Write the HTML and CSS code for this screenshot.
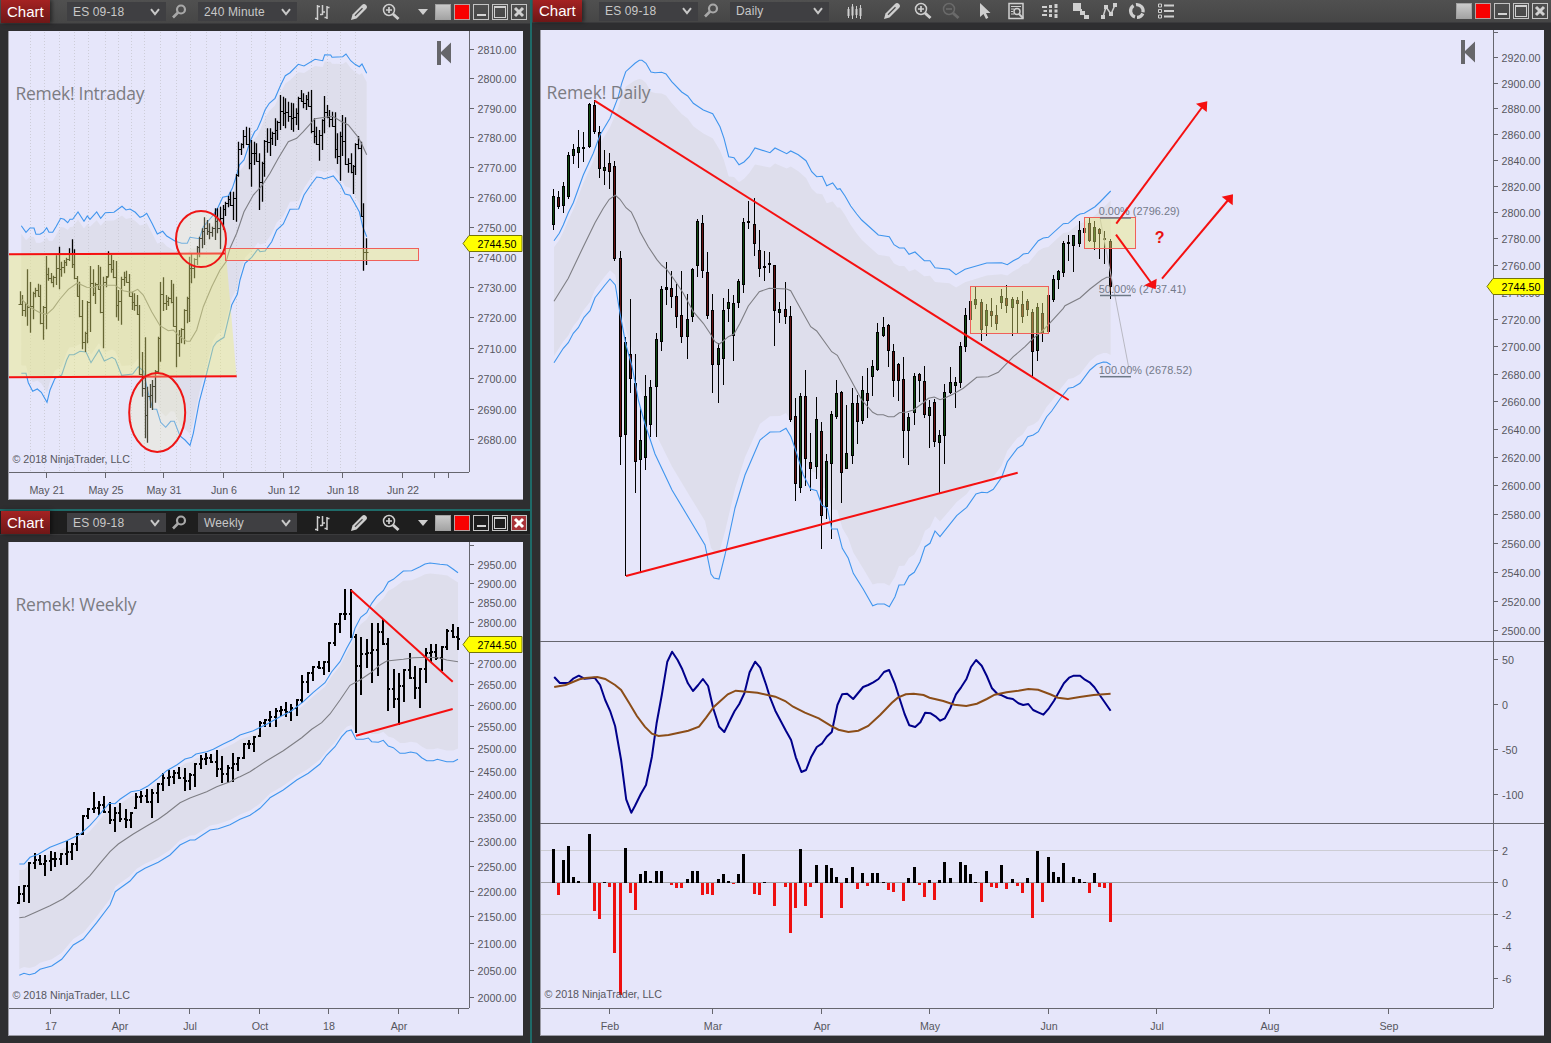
FILE: index.html
```html
<!DOCTYPE html>
<html lang="en">
<head>
<meta charset="utf-8">
<title>Chart workspace</title>
<link rel="stylesheet" href="styles.css">
</head>
<body>
<svg class="sprite" aria-hidden="true">
  <symbol id="i-chev" viewBox="0 0 10 8"><path d="M1 1.2 5 6.2 9 1.2" fill="none" stroke="currentColor" stroke-width="2"/></symbol>
  <symbol id="i-mag" viewBox="0 0 18 18"><circle cx="11" cy="6.5" r="4" fill="none" stroke="currentColor" stroke-width="2.2"/><path d="M8 9.5 3 14.5" stroke="currentColor" stroke-width="2.6"/></symbol>
  <symbol id="i-ohlc" viewBox="0 0 18 18"><path d="M4.500 2v15M2 15.500h2.500M4.500 3.500H7M9.500 2v10M7 11.500h2.500M9.500 9H12M14 3v13M11.500 14.500H14M14 4.500h2.500" fill="none" stroke="currentColor" stroke-width="1.500"/></symbol>
  <symbol id="i-candle" viewBox="0 0 18 18"><path d="M2.500 5v11M6.500 2v15M10.500 4v12M14.500 3v14" stroke="currentColor"/><path d="M1.500 7h2v7h-2zM5.500 4.500h2v9h-2zM9.500 7h2v6h-2zM13.500 6h2v8h-2z" fill="currentColor"/></symbol>
  <symbol id="i-pen" viewBox="0 0 18 18"><path d="M1 17 2.500 11.500 12 2Q14 .2 16 2T16 6L6.500 15.500Z" fill="currentColor"/><path d="M5 12.800 12.500 5.300" stroke="#4a4a4a" stroke-width="1.300"/></symbol>
  <symbol id="i-zin" viewBox="0 0 18 18"><circle cx="7" cy="7" r="5.500" fill="none" stroke="currentColor" stroke-width="1.500"/><path d="M4 7h6M7 4v6" stroke="currentColor" stroke-width="1.700"/><path d="m11 11 5.500 5" stroke="currentColor" stroke-width="3"/></symbol>
  <symbol id="i-zout" viewBox="0 0 18 18"><circle cx="7" cy="7" r="5.500" fill="none" stroke="currentColor" stroke-width="1.500"/><path d="M4 7h6" stroke="currentColor" stroke-width="1.700"/><path d="m11 11 5.500 5" stroke="currentColor" stroke-width="3"/></symbol>
  <symbol id="i-caret" viewBox="0 0 10 6"><path d="M0 0h10L5 6Z" fill="currentColor"/></symbol>
  <symbol id="i-cur" viewBox="0 0 18 18"><path d="M4 1v14l3.500-3 2.500 5 2.300-1.200L10 11h4.500Z" fill="currentColor"/></symbol>
  <symbol id="i-doc" viewBox="0 0 18 18"><path d="M2 1.500h14v15H2z" fill="none" stroke="currentColor" stroke-width="1.500"/><path d="M4 4.500h10M4 7h3M4 9.500h2M4 12h3" stroke="currentColor"/><circle cx="10" cy="9.500" r="3" fill="none" stroke="currentColor" stroke-width="1.500"/><path d="m12 12 4 4" stroke="currentColor" stroke-width="2"/></symbol>
  <symbol id="i-dom" viewBox="0 0 18 18"><path d="M1 4h5v2H1zM2.500 8H6v2H2.500zM1 12h5v2H1zM8 3h3v3H8zM8 7.500h3v3H8zM8 12h3v3H8zM13.500 2h3v4h-3zM13.500 7.500h3v3h-3zM13.500 12h3v4h-3z" fill="currentColor"/></symbol>
  <symbol id="i-blocks" viewBox="0 0 18 18"><path d="M1 1h8v8H1zM8 10V7h2v2h3v4H8zM12 13h5v4h-5z" fill="currentColor"/></symbol>
  <symbol id="i-poly" viewBox="0 0 18 18"><path d="M3 15 6 5l5 7 4-9" fill="none" stroke="currentColor" stroke-width="1.500"/><path d="M1 13h4v4H1zM4 3h4v4H4zM9 10h4v4H9zM13 1h4v4h-4z" fill="currentColor"/></symbol>
  <symbol id="i-ring" viewBox="0 0 18 18"><path d="M7 15A6.300 6.300 0 0 1 5.500 3.700M8 2.700a6.300 6.300 0 0 1 7 7.500M14.800 11.500A6.300 6.300 0 0 1 9 15.300" fill="none" stroke="currentColor" stroke-width="3.200"/></symbol>
  <symbol id="i-list" viewBox="0 0 18 18"><path d="M1.500 2h3v3h-3zM1.500 7.500h3v3h-3zM1.500 13h3v3h-3z" fill="none" stroke="currentColor"/><path d="M7 3.500h10M7 9h10M7 14.500h10" stroke="currentColor" stroke-width="2"/></symbol>
  <symbol id="i-x" viewBox="0 0 16 16"><path d="m4 4 8 8M12 4l-8 8" stroke="currentColor" stroke-width="3"/></symbol>
</svg>

<main class="workspace">
  <div class="left">
    <section class="window">
      <header class="bar">
        <span class="tab">Chart</span>
        <span class="combo">ES 09-18<svg class="chev"><use href="#i-chev"/></svg></span>
        <svg class="mag"><use href="#i-mag"/></svg>
        <span class="combo second">240 Minute<svg class="chev"><use href="#i-chev"/></svg></span>
        <div class="tools">
          <svg><use href="#i-ohlc"/></svg><svg><use href="#i-pen"/></svg><svg><use href="#i-zin"/></svg><svg class="caret"><use href="#i-caret"/></svg>
        </div>
        <div class="buttons"><i class="grey"></i><i class="red"></i><i class="min"></i><i class="max"></i><i class="close"><svg><use href="#i-x"/></svg></i></div>
      </header>
      <svg class="plot" id="intraday" viewBox="8 31 515 469"></svg>
    </section>
    <section class="window active">
      <header class="bar">
        <span class="tab">Chart</span>
        <span class="combo">ES 09-18<svg class="chev"><use href="#i-chev"/></svg></span>
        <svg class="mag"><use href="#i-mag"/></svg>
        <span class="combo second">Weekly<svg class="chev"><use href="#i-chev"/></svg></span>
        <div class="tools">
          <svg><use href="#i-ohlc"/></svg><svg><use href="#i-pen"/></svg><svg><use href="#i-zin"/></svg><svg class="caret"><use href="#i-caret"/></svg>
        </div>
        <div class="buttons"><i class="grey"></i><i class="red"></i><i class="min"></i><i class="max"></i><i class="close"><svg><use href="#i-x"/></svg></i></div>
      </header>
      <svg class="plot" id="weekly" viewBox="8 542 515 494"></svg>
    </section>
  </div>
  <section class="window wide">
    <header class="bar">
      <span class="tab">Chart</span>
      <span class="combo">ES 09-18<svg class="chev"><use href="#i-chev"/></svg></span>
      <svg class="mag"><use href="#i-mag"/></svg>
      <span class="combo second">Daily<svg class="chev"><use href="#i-chev"/></svg></span>
      <div class="tools">
        <svg><use href="#i-candle"/></svg><svg><use href="#i-pen"/></svg><svg><use href="#i-zin"/></svg><svg class="dim"><use href="#i-zout"/></svg><svg><use href="#i-cur"/></svg><svg><use href="#i-doc"/></svg><svg><use href="#i-dom"/></svg><svg><use href="#i-blocks"/></svg><svg><use href="#i-poly"/></svg><svg><use href="#i-ring"/></svg><svg><use href="#i-list"/></svg>
      </div>
      <div class="buttons"><i class="grey"></i><i class="red"></i><i class="min"></i><i class="max"></i><i class="close"><svg><use href="#i-x"/></svg></i></div>
    </header>
    <svg class="plot" id="daily" viewBox="540 30 1004 1006"></svg>
  </section>
</main>
<script src="charts.js"></script>
</body>
</html>
```
FILE: styles.css
```css
* { box-sizing: border-box; }
body {
  margin: 0;
  width: 1551px;
  height: 1043px;
  overflow: hidden;
  background: #2e2e30;
  font-family: "Liberation Sans", Arial, sans-serif;
}
.sprite { display: none; }
.workspace { display: grid; grid-template-columns: 532px 1019px; height: 1043px; }
.left {
  display: grid;
  grid-template-rows: 511px 532px;
  border-right: 2px solid #1f6a68;
}
.window { display: flex; flex-direction: column; padding: 0 7px 0 8px; background: #2e2e30; }
.left .window:first-child { border-bottom: 2px solid #1f6a68; }
.plot { display: block; flex: none; background: #e6e6fa; }
#intraday, #weekly { width: 515px; margin-top: 7px; }
#intraday { height: 469px; }
#weekly { height: 494px; }
#daily { width: 1004px; height: 1006px; margin-top: 7px; }

/* title bar */
.bar {
  display: flex;
  align-items: center;
  flex: none;
  height: 24px;
  margin: 0 -7px 0 -8px;
  padding-left: 1px;
  background: linear-gradient(#505050, #464646);
  border-bottom: 1px solid #3a3a3c;
  color: #d0d0d0;
}
.wide .bar { height: 23px; padding-right: 3px; }
.active .bar { background: #1e1e1e; border-bottom-color: #3a3a3c; }
.tab {
  align-self: stretch;
  width: 49px;
  padding: 3px 0 0 6px;
  font-size: 15px;
  line-height: 17px;
  color: #fff;
  background: linear-gradient(#a52222, #6e1717);
  box-shadow: 2px 0 4px rgba(0, 0, 0, .5);
}
.wide .tab { padding-top: 2px; }
.combo {
  display: flex;
  align-items: center;
  justify-content: space-between;
  width: 99px;
  height: 19px;
  margin-left: 17px;
  padding: 0 6px;
  font-size: 12px;
  letter-spacing: .15px;
  color: #c8c8c8;
  background: #3f3f42;
}
.combo.second { margin-left: 0; }
.chev { width: 10px; height: 8px; }
.mag { width: 18px; height: 18px; margin: 0 10px 0 4px; color: #a8a8a8; }
.tools { display: flex; align-items: center; color: #cfcfcf; }
.tools svg { width: 18px; height: 18px; }
.left .tools svg:nth-child(1) { margin-left: 16px; }
.left .tools svg:nth-child(2) { margin-left: 19px; }
.left .tools svg:nth-child(3) { margin-left: 14px; }
.left .tools .caret { width: 10px; height: 6px; margin-left: 18px; }
.wide .tools svg { margin-left: 13px; }
.wide .tools svg:nth-child(1) { margin-left: 17px; }
.wide .tools svg:nth-child(2) { margin-left: 19px; }
.wide .tools svg:nth-child(4) { margin-left: 10px; }
.wide .tools svg:nth-child(5) { margin-left: 16px; }
.wide .tools svg:nth-child(7) { margin-left: 16px; }
.wide .tools svg:nth-child(9) { margin-left: 10px; }
.wide .tools svg:nth-child(10) { margin-left: 10px; }
.wide .tools svg:nth-child(11) { margin-left: 11px; }
.tools .dim { color: #6a6a6a; }
.buttons { display: flex; gap: 3px; margin-left: 7px; }
.wide .buttons { margin-left: auto; }
.buttons i {
  display: flex;
  align-items: center;
  justify-content: center;
  width: 16px;
  height: 16px;
  border: 1px solid #c4c4c4;
}
.buttons .grey { background: linear-gradient(#cacaca, #a4a4a4); border-color: #a2a2a2; }
.buttons .red { background: #f80000; border-color: #b8a0a0; }
.min::after { content: ""; width: 9px; height: 2px; margin-top: 6px; background: #d4d4d4; }
.max::after { content: ""; width: 10px; height: 9px; border: 1px solid #d0d0d0; border-top-width: 2px; }
.close svg { width: 16px; height: 16px; flex: none; }
.active .buttons { color: #fff; }
.active .close { background: #a83238; }

/* charts */
.plot text { font-size: 10.7px; fill: #56565e; }
.plot .title { font-family: "Open Sans", "Noto Sans", sans-serif; font-size: 17.5px; fill: #7c7c82; }
.plot .tagtext { fill: #000; }
.plot .fib { font-size: 10.9px; fill: #747a8a; }
.plot .question { font-size: 16px; font-weight: bold; fill: #e81010; }
.axis { stroke: #66666e; stroke-width: 1; shape-rendering: crispEdges; fill: none; }
.edge { stroke: #9a9aa4; }
.grid { stroke: #cdcdd8; stroke-dasharray: 1 2; shape-rendering: crispEdges; }
.level { stroke: #cdcdd4; shape-rendering: crispEdges; }
.zero { stroke: #a0a0a6; shape-rendering: crispEdges; }
.shade { fill: #dedeec; }
.band { fill: none; stroke: #3f95ee; stroke-width: 1.1; }
.mid { fill: none; stroke: #7e7e84; stroke-width: 1.1; }
.trend { fill: none; stroke: #f51010; stroke-width: 2; }
.head { fill: #f51010; }
.ohlc { fill: none; stroke: #000; }
.stem { stroke-width: 1.3; }
.nub { stroke-width: 1; }
.heavy .stem { stroke-width: 2; shape-rendering: crispEdges; }
.heavy .nub { stroke-width: 2; shape-rendering: crispEdges; }
.crisp { shape-rendering: crispEdges; }
.zone { fill: #ecec78; fill-opacity: .43; }
.box { fill: #ecec78; fill-opacity: .43; stroke: #f0605a; stroke-width: 1; }
.ring { fill: #f0f0b8; fill-opacity: .3; stroke: #ee1515; stroke-width: 2; }
.tag { fill: #ff0; stroke: #74740a; }
.nav { fill: #66666a; }
.fast { fill: none; stroke: #00008b; stroke-width: 2; stroke-linejoin: round; }
.slow { fill: none; stroke: #8b4d18; stroke-width: 2; }
.fibline { stroke: #6d7886; stroke-width: 1.500; }
.fiblink { stroke: #b8b8c2; }
```
FILE: charts.js
```js
// Builds one SVG node and appends it.
function add(svg, tag, attrs, text) {
  const n = document.createElementNS('http://www.w3.org/2000/svg', tag);
  for (const k in attrs) n.setAttribute(k, attrs[k]);
  if (text !== undefined) n.textContent = text;
  svg.appendChild(n);
  return n;
}
const line = (svg, x1, y1, x2, y2, c) => add(svg, 'path', { d: `M${x1} ${y1}L${x2} ${y2}`, class: c });
const label = (svg, x, y, t, c, w) => {
  const a = { x, y, class: c || '' };
  if (w) a.textLength = w;
  return add(svg, 'text', a, t);
};
// Parses "x,y x,y" samples stored at a sub-pixel scale.
const pts = (s, ox, oy, sx = 3, sy = 3) => s.trim().split(/\s+/).map(p => {
  const v = p.split(',').map(Number);
  return [ox + v[0] / sx, oy + v[1] / sy];
});
const path = (svg, p, c) => add(svg, 'path', { d: 'M' + p.map(q => q[0].toFixed(1) + ' ' + q[1].toFixed(1)).join('L'), class: c });
function at(p, x) {
  for (let i = 1; i < p.length; i++) if (x <= p[i][0]) {
    const a = p[i - 1], b = p[i];
    return a[1] + (b[1] - a[1]) * (x - a[0]) / ((b[0] - a[0]) || 1);
  }
  return p[p.length - 1][1];
}
function shade(svg, up, mid, lo) {
  const top = up.map(([x, y]) => [x, y + (at(mid, x) - y) * 0.11]);
  const bot = lo.map(([x, y]) => [x, y + (at(mid, x) - y) * 0.11]).reverse();
  path(svg, top.concat(bot), 'shade');
}
// Price bars: a stem with an open nub on the left and a close nub on the right.
function ohlc(svg, bars, heavy) {
  const t = 2;
  let prev = null, stems = '', nubs = '';
  bars.forEach((b, i) => {
    const [x, h, l] = b;
    const n = bars[i + 1] || b, m = (n[1] + n[2]) / 2;
    const c = Math.min(l - 1, Math.max(h + 1, m));
    const o = prev === null ? l - 1 : Math.min(l - 1, Math.max(h + 1, prev));
    const X = heavy ? Math.round(x) : Math.floor(x) + .5;
    const f = heavy ? 0 : .5;
    stems += `M${X} ${h}V${l}`;
    nubs += `M${X - t} ${Math.round(o) + f}H${X}M${X} ${Math.round(c) + f}H${X + t}`;
    prev = c;
  });
  const g = add(svg, 'g', { class: 'ohlc' + (heavy ? ' heavy' : '') });
  add(g, 'path', { d: stems, class: 'stem' });
  add(g, 'path', { d: nubs, class: 'nub' });
}
const bars = (s, ox, oy) => s.trim().split(/\s+/).map(b => {
  const [x, r] = b.split(':'), [h, l] = r.split('-').map(Number);
  return [ox + x / 3, oy + h / 3, oy + l / 3];
});
function frame(svg, x0, y0, x1, y1, ax, ay) {
  line(svg, ax + .5, y0, ax + .5, ay, 'axis');
  line(svg, x0, ay + .5, ax, ay + .5, 'axis');
  line(svg, x0 + .5, y0, x0 + .5, y1, 'axis edge');
  line(svg, x0, y1 - .5, x1, y1 - .5, 'axis edge');
}
function yLabels(svg, ax, first, step, ys, skip) {
  ys.forEach((y, i) => {
    const v = (first - step * i).toFixed(2);
    line(svg, ax, y, ax + 5, y, 'axis');
    if (v !== skip) label(svg, ax + 8.5, y + 4, v, '', 39);
  });
}
const xTicks = (svg, ay, arr) => arr.forEach(([x, t]) => {
  line(svg, x, ay, x, ay + 6, 'axis');
  if (t) add(svg, 'text', { x: x + .5, y: ay + 21.500, 'text-anchor': 'middle' }, t);
});
function tag(svg, ax, y) {
  add(svg, 'path', { d: `M${ax - 6} ${y}L${ax} ${y - 8}H${ax + 53}V${y + 8}H${ax}Z`, class: 'tag' });
  label(svg, ax + 8.5, y + 4, '2744.50', 'tagtext', 39);
}
const nav = (svg, x, y) => add(svg, 'path', { d: `M${x} ${y}h4v11l10-9.500v21l-10-9.500v11h-4z`, class: 'nav' });

// ---------- 240 minute ----------
{
  const s = document.getElementById('intraday');
  const a = (t) => pts(t, 0, 180), b = (t) => pts(t, 220, 30);
  const up = a('64,137 78,157 90,144 102,144 108,163 120,163 130,157 140,143 147,157 158,157 168,140 182,115 192,118 203,128 210,118 218,118 234,96 252,124 262,108 270,118 290,96 302,115 316,98 342,97 366,79 378,90 390,87 406,97 420,112 430,108 440,100 456,130 472,162 488,154 500,168 526,184 545,190 562,190 570,172 598,176 610,140 640,105 655,80 668,52 685,48 697,25')
    .concat(b('50,435 58,405 72,390 92,330 104,305 112,298 124,270 135,240 148,220 165,205 182,165 196,137 210,128 235,103 252,108 285,88 308,92 314,74 332,75 336,82 368,80 378,72 392,92 405,103 418,110 426,102 440,130'));
  const mid = a('64,357 90,382 120,398 140,403 160,385 180,357 205,328 232,309 260,322 280,323 295,316 345,316 370,332 395,337 413,328 430,345 455,395 480,437 505,452 520,450 540,470 560,484 570,484 590,450 610,380 635,320 660,270')
    .concat(b('6,712 18,695 30,655 50,610 72,545 100,495 125,468 150,430 175,385 205,335 230,325 250,305 285,266 315,262 338,259 360,272 385,285 415,322 425,342 440,374'));
  const lo = a('64,580 78,580 85,608 98,634 112,627 124,637 141,667 150,630 165,595 185,585 200,540 208,524 222,524 240,514 258,516 273,548 297,510 313,543 336,532 346,538 365,586 398,582 415,560 430,572 445,640 458,687 470,688 482,727 497,742 512,724 523,724 540,768 555,780 570,796 580,760 598,665 615,600 640,500 650,486 672,472 695,375')
    .concat(b('52,793 60,750 75,700 95,682 114,657 120,665 135,663 155,635 170,600 190,582 210,538 236,537 252,495 272,465 290,441 305,443 312,447 340,438 362,465 375,492 390,496 405,522 418,545 428,590 440,620'));
  shade(s, up, mid, lo);
  [30, 44, 59, 74, 88, 105, 118, 131, 144, 160, 176, 190, 206, 220, 236, 251, 265, 280, 296, 311, 327, 340, 355].forEach(x => line(s, x + .5, 32, x + .5, 472, 'grid'));
  path(s, up, 'band'); path(s, lo, 'band');
  ohlc(s, bars('62:334-374 68:345-408 76:368-410 83:268-437 92:306-458 100:335-418 107:323-352 116:311-350 122:314-433 130:378-479 140:228-448 146:263-302 154:279-310 161:287-322 169:226-315 178:200-328 184:245-290 192:240-280 200:233-258 208:205-243 218:178-264 223:208-298 232:288-350 239:305-412 246:360-508 255:455-516 263:363-490 271:258-456 279:268-348 287:308-372 295:255-330 302:260-400 310:290-505 318:288-322 326:214-290 334:225-278 341:240-295 349:243-412 356:330-422 364:290-434 372:275-318 379:272-308 388:282-350 396:335-390 403:340-392 411:345-405 418:375-585 427:516-650 436:472-775 443:620-788 451:612-684 458:600-690 466:570-668 474:470-582 481:306-545 490:292-393 498:345-390 506:350-378 514:300-370 521:311-440 529:350-562 537:450-530 545:445-490 553:388-493 561:350-430 568:230-426 575:220-310 583:235-295 591:198-255 599:170-232 606:145-205 613:112-195 621:120-165 629:130-178 638:140-170 645:85-180 652:85-160 661:80-207 670:75-150 677:65-108 685:48-82 692:35-78', 0, 180)
    .concat(bars('41:485-570 49:432-575 56:335-440 63:340-375 71:300-355 79:290-345 88:293-418 94:330-470 102:335-405 110:340-395 118:370-540 126:395-515 134:330-440 143:295-368 150:295-378 158:305-345 166:265-348 173:272-330 181:195-300 189:200-288 197:205-295 206:215-275 213:218-300 221:220-305 229:235-285 236:200-300 244:180-215 251:190-235 259:195-240 266:185-230 274:180-310 282:265-340 290:290-345 298:300-392 306:268-360 313:198-310 321:225-265 329:240-292 337:245-290 345:247-385 353:310-402 361:305-452 368:255-378 376:262-405 385:385-428 393:370-430 401:405-492 407:340-435 415:318-358 423:335-560 431:520-722 440:625-705', 220, 30)), false);
  path(s, mid, 'mid');
  add(s, 'path', { d: 'M8 254H226L236.500 376L8 377Z', class: 'zone' });
  add(s, 'rect', { x: 225.5, y: 248.5, width: 193, height: 12, class: 'box' });
  line(s, 8, 254.300, 225, 253.500, 'trend');
  line(s, 8, 377.300, 236.700, 376.300, 'trend');
  add(s, 'ellipse', { cx: 201, cy: 239, rx: 25, ry: 28, class: 'ring' });
  add(s, 'ellipse', { cx: 157.200, cy: 412.500, rx: 28, ry: 39.500, class: 'ring' });
  frame(s, 8, 31, 523, 500, 469, 472);
  yLabels(s, 469, 2810, 10, [49.5, 78.5, 108.5, 137.5, 167.5, 197.5, 227.5, 257.5, 287.5, 317.5, 348.5, 378.5, 409.5, 439.5]);
  xTicks(s, 472, [[46.5, 'May 21'], [105.5, 'May 25'], [163.5, 'May 31'], [223.5, 'Jun 6'], [283.5, 'Jun 12'], [342.5, 'Jun 18'], [402.5, 'Jun 22'], [434.5], [448.5]]);
  tag(s, 469, 243.5);
  nav(s, 437, 41);
  label(s, 15.500, 100, 'Remek! Intraday', 'title', 129);
  label(s, 12.500, 463, '© 2018 NinjaTrader, LLC', '', 117.500);
}

// ---------- weekly ----------
{
  const s = document.getElementById('weekly');
  const a = (t) => pts(t, 0, 740), b = (t) => pts(t, 240, 560);
  const up = a('58,372 72,372 90,352 115,343 150,322 200,302 240,283 270,256 290,234 310,210 328,190 345,191 360,178 393,155 420,151 445,137 470,118 500,92 530,75 555,57 575,52 588,42 620,35 640,28 670,12 700,-2')
    .concat(b('0,525 40,512 80,493 120,470 155,452 190,425 220,397 255,368 275,335 300,305 320,265 335,238 345,205 362,172 380,158 395,130 410,110 430,92 445,66 460,58 490,33 515,32 540,20 555,12 570,9 600,13 622,15 640,28 654,38'));
  const mid = a('58,533 75,531 110,515 150,497 190,476 230,445 270,407 300,370 330,335 355,312 400,282 440,258 475,238 500,220 540,188 570,174 620,155 650,140 690,125 715,112')
    .concat(b('0,650 30,635 80,602 130,572 185,533 215,508 245,488 270,462 300,420 330,376 360,360 390,340 420,315 440,303 490,298 520,293 570,292 600,294 620,300 654,305'));
  const lo = a('58,706 72,700 88,704 105,700 120,688 155,678 185,658 220,615 250,597 290,548 330,495 346,455 360,445 390,423 410,400 435,385 475,367 510,345 540,315 570,300 585,300 630,270 655,266 690,254 720,238 750,226 780,205 808,176')
    .concat(b('90,713 130,690 170,660 205,640 240,612 260,585 285,560 305,530 320,514 334,510 348,538 370,538 385,534 395,545 415,547 430,541 445,558 460,563 480,580 495,580 512,576 530,580 545,593 560,602 580,602 592,598 620,605 640,605 654,598'));
  shade(s, up, mid, lo);
  ohlc(s, bars('57:438-493 71:436-486 87:365-490 104:340-388 120:346-376 136:346-408 152:332-392 166:336-380 183:340-374 200:302-374 216:310-360 232:278-332 249:226-284 265:204-238 282:157-218 297:184-226 312:168-220 330:185-252 345:202-275 360:190-246 377:206-265 393:215-265 408:160-206 424:154-190 440:148-188 457:148-235 474:130-188 490:98-154 506:90-137 522:90-132 537:80-116 555:85-152 570:98-150 585:68-140 602:44-88 618:40-76 633:42-68 650:30-112 667:48-128 684:75-130 700:40-125 714:52-92', 0, 740)
    .concat(bars('12:550-598 27:540-566 42:528-575 59:484-532 75:478-502 91:453-500 107:444-500 122:438-468 138:427-472 154:432-482 170:418-467 187:345-428 203:336-398 219:318-362 236:302-328 252:302-344 267:246-335 284:190-257 299:160-218 316:88-180 332:86-235 348:222-520 362:232-404 380:238-325 396:190-368 413:190-347 429:178-254 445:235-452 461:327-445 476:340-495 492:328-426 509:280-357 525:318-418 541:325-445 558:265-368 573:253-305 589:253-300 605:258-332 620:208-270 638:193-233 654:202-270', 240, 560)), true);
  path(s, mid, 'mid'); path(s, up, 'band'); path(s, lo, 'band');
  line(s, 351, 590.300, 452.700, 681.700, 'trend');
  line(s, 356, 735.700, 452.700, 709, 'trend');
  frame(s, 8, 542, 523, 1036, 469, 1008);
  line(s, 469, 545.500, 474, 545.500, 'axis');
  yLabels(s, 469, 2950, 50, [564.5, 583.5, 602.5, 622.5, 643.5, 663.5, 684.5, 705.5, 726.5, 748.5, 771.5, 794.5, 817.5, 841.5, 866.5, 891.5, 916.5, 943.5, 970.5, 997.5], '2750.00');
  xTicks(s, 1008, [[50.5, '17'], [119.5, 'Apr'], [189.5, 'Jul'], [259.5, 'Oct'], [328.5, '18'], [398.5, 'Apr'], [458.5]]);
  tag(s, 469, 644.5);
  label(s, 15.500, 611, 'Remek! Weekly', 'title', 121);
  label(s, 12.500, 999, '© 2018 NinjaTrader, LLC', '', 117.500);
}

// ---------- daily ----------
{
  const s = document.getElementById('daily');
  const a = (t) => pts(t, 540, 60), b = (t) => pts(t, 780, 220), c = (t) => pts(t, 1040, 80);
  const up = a('42,542 58,520 70,495 85,458 100,428 130,345 160,280 180,225 210,175 235,110 245,70 257,35 285,10 298,1 306,1 318,10 333,36 345,38 365,37 378,42 395,65 425,96 443,108 460,130 490,150 518,161 540,200 552,235 566,290 582,293 597,314 612,306 628,290 645,264 690,278 705,264 740,281 752,273 775,284 798,302 815,335 830,350 847,349 860,377 878,369 892,388 900,386')
    .concat(b('195,-72 212,-42 230,-18 245,0 262,15 295,45 328,50 342,74 358,84 373,84 387,103 405,96 433,122 450,122 465,143 508,148 528,164 555,148 620,129 665,128 682,134 700,122 715,115 730,102 745,100 775,62 790,54 805,52'))
    .concat(c('70,431 85,430 110,408 120,402 133,400 165,380 180,366 212,333'));
  const mid = a('42,724 85,655 130,560 165,488 190,445 208,418 226,406 240,418 258,443 274,456 290,490 300,515 325,560 350,598 365,616 380,628 400,655 430,700 460,755 490,790 510,820 525,845 537,853 550,843 565,830 582,822 600,790 625,738 658,695 688,685 740,687 752,692 770,725')
    .concat(b('92,320 110,333 155,395 172,406 210,475 245,540 278,577 292,584 310,584 325,590 342,590 358,578 380,576 400,570 430,548 445,535 463,531 480,539 495,534 520,522 550,505 590,472 625,470 655,457 700,410 735,380 760,355 790,330 820,298 850,265'))
    .concat(c('75,677 120,654 150,627 185,600 200,592 212,592'));
  const lo = a('42,908 70,865 85,848 100,820 115,803 132,772 150,752 165,713 195,675 210,657 226,675 240,760 258,855 275,915 288,980 295,1020')
    .concat([[645, 424], [655, 454], [672, 490], [690, 520], [705, 545], [711, 574], [714, 578], [719, 579], [725, 555], [735, 508], [745, 475], [760, 440], [770, 432]])
    .concat(b('0,635 18,625 33,650 50,700 70,765 92,807 110,812 125,855 142,865 155,927 172,927 187,985 205,1015 220,1060 250,1108 278,1157 292,1152 313,1152 328,1160 345,1130 357,1095 373,1094 387,1068 403,1057 420,1025 435,980 450,970 465,933 480,950 530,887 560,862 588,822 605,817 622,818 640,808 665,772 682,725 712,685 728,675 743,650 760,645 775,635 800,590 815,573 840,537'))
    .concat(c('85,925 100,922 120,910 150,870 170,853 190,846 200,847 212,854'));
  shade(s, up, mid, lo);

  const candles = (t, ox, oy) => t.trim().split(/\s+/).forEach(r => {
    const v = r.split(','), x = Math.round(ox + v[0] / 3 - .4);
    const [h, t1, b1, l] = v.slice(1, 5).map(n => Math.round(oy + n / 3));
    const hh = Math.max(2, b1 - t1);
    add(s, 'rect', { x, y: h, width: 1, height: Math.max(1, l - h), fill: '#000', class: 'crisp' });
    add(s, 'rect', { x: x - 1, y: t1, width: 3, height: hh, fill: '#000', class: 'crisp' });
    if (hh > 3) add(s, 'rect', { x, y: t1 + 1, width: 1, height: hh - 2, fill: v[5] === 'g' ? '#0f480f' : '#641212', class: 'crisp' });
  });
  candles(`40,387,408,494,510,g 55,392,412,440,448,r 70,366,378,438,458,g 86,277,286,410,416,g 100,252,267,288,312,g 115,210,262,280,323,g 130,216,262,268,306,g 149,128,132,260,264,g 163,120,135,215,222,r 178,198,216,328,353,r 193,270,322,332,376,g 208,280,310,335,386,r 223,303,318,597,602,r
    241,574,594,1130,1215,r 256,830,845,1125,1548,g 271,716,882,957,1000,r 286,882,968,1205,1300,r 301,1040,1140,1200,1539,g 316,945,1008,1195,1230,g 331,960,980,1095,1130,g 349,820,838,980,1130,g 364,678,688,845,872,g 379,606,682,690,735,r 394,633,684,710,745,r 409,673,708,770,803,r 424,633,765,830,850,r 442,703,778,832,898,g 457,624,628,772,785,g 472,478,482,617,652,g 487,465,490,632,655,r 502,577,636,768,778,r 517,703,750,914,998,r 535,848,865,914,1030,g 550,714,750,896,975,g 565,687,726,748,785,g 580,705,730,828,902,g 595,658,663,728,745,g 610,474,487,674,700,g 625,422,484,488,507,r 643,415,492,552,588,r 658,510,570,627,650,r 673,573,618,622,662,g 688,576,610,616,640,r 703,614,616,752,857,r 718,727,747,758,790,g 736,667,747,770,793,r`, 540, 60);
  candles(`31,258,288,600,605,r 46,534,588,792,842,r 61,520,528,803,820,g 76,450,528,716,797,r 91,640,727,748,812,r 109,532,598,740,776,g 124,606,633,887,987,r 139,703,723,860,896,g 154,573,582,732,956,g 169,480,520,590,597,g 184,512,516,758,850,r 199,555,700,748,748,g 217,503,550,708,732,g 232,525,550,607,672,r 247,467,510,602,613,g 262,444,520,542,594,r 277,420,438,472,527,g 292,310,336,450,452,g 310,291,321,347,350,g 325,312,316,392,440,r 340,372,393,482,530,r 355,429,433,482,542,r 370,411,478,632,713,r 385,578,591,632,735,g 403,460,469,578,615,g 418,460,463,482,545,r 433,437,484,584,593,r 448,540,561,587,683,g 463,537,547,665,680,r 478,631,646,668,818,g 493,492,516,647,732,g 511,441,487,518,523,g 526,472,487,497,563,g 541,365,378,488,504,g 556,264,286,380,395,g 571,234,243,300,300,r 586,198,237,254,266,g 604,237,246,330,362,r 619,252,270,318,347,g 634,234,273,287,322,r 649,255,286,312,330,r 664,207,228,248,266,g 679,195,234,257,278,r 697,231,237,263,348,g 712,231,240,251,340,r 727,213,252,290,308,r 742,237,243,269,288,r 757,267,276,395,468,r 772,249,261,392,422,g 787,249,279,342,366,r 805,216,225,335,341,r 820,165,177,240,245,g 835,150,153,180,206,g 850,63,69,158,170,g 865,45,67,71,122,r 880,45,46,77,155,g`, 780, 220);
  candles('118,424,450,492,500,g 133,417,444,458,468,r 148,413,430,482,485,r 163,423,440,485,510,g 178,444,447,461,536,r 193,454,474,480,551,g 211,478,484,620,656,r', 1040, 80);

  path(s, mid, 'mid'); path(s, up, 'band'); path(s, lo, 'band');
  line(s, 1100, 218, 1129, 369, 'fiblink');
  add(s, 'rect', { x: 970.5, y: 286.5, width: 78, height: 47, class: 'box' });
  add(s, 'rect', { x: 1084.5, y: 217.5, width: 51, height: 31, class: 'box' });
  [[218, 215, '0.00% (2796.29)', 81], [295.5, 293, '50.00% (2737.41)', 87.5], [376.7, 374, '100.00% (2678.52)', 93.5]].forEach(([ly, ty, t, w]) => {
    line(s, 1100, ly, 1131, ly, 'fibline');
    label(s, 1098.700, ty, t, 'fib', w);
  });
  line(s, 594.500, 100.700, 1068.700, 400, 'trend');
  line(s, 626, 576, 1017.700, 472.700, 'trend');
  line(s, 1116.300, 223.700, 1203, 106, 'trend');
  line(s, 1116, 234.700, 1152, 284, 'trend');
  line(s, 1162, 278.700, 1229, 199, 'trend');
  ['M1207.300 101.300L1196 103.700L1206.700 112Z', 'M1155.700 289.300L1144.300 285.300L1156.700 278.700Z', 'M1233 194.300L1221.700 196.700L1232.700 205.300Z'].forEach(d => add(s, 'path', { d, class: 'head' }));
  label(s, 1154.700, 242.700, '?', 'question');

  // momentum pane
  const o = (t) => pts(t, 540, 640, 2.529, 3);
  path(s, o('36,111 50,129 72,129 85,115 98,107 112,116 138,113 152,135 165,180 178,215 190,258 205,360 218,478 231,518 240,498 255,462 268,435 283,350 295,250 308,165 322,65 334,35 348,60 360,88 374,130 387,153 400,135 412,117 425,138 438,205 453,260 466,276 480,242 492,214 504,192 517,160 530,97 544,65 557,83 572,135 582,173 595,212 622,272 635,300 647,352 661,396 673,390 686,350 700,321 713,311 725,290 738,276 752,195 764,163 777,161 792,177 817,141 830,135 843,127 856,117 870,96 883,90 897,130 910,178 922,222 934,256 949,261 962,247 974,218 988,220 1000,229 1012,242 1024,235 1038,204 1052,163 1065,142 1078,118 1090,81 1103,60 1117,77 1130,108 1143,145 1157,162 1168,166 1182,174 1196,177 1210,190 1222,195 1235,192 1247,210 1260,217 1273,224 1287,205 1300,182 1312,157 1325,130 1338,113 1350,107 1366,107 1378,119 1390,127 1402,142 1415,164 1443,212'), 'fast');
  path(s, o('36,141 65,135 100,118 115,114 145,111 165,117 190,135 205,150 225,188 245,228 265,260 283,281 300,288 325,285 375,272 402,260 420,233 440,200 475,163 495,152 550,158 595,170 620,183 640,200 670,218 705,235 735,257 755,269 780,276 805,272 830,258 860,225 890,188 905,173 925,163 945,161 970,165 985,173 1020,183 1048,194 1078,198 1105,191 1130,177 1150,164 1180,157 1210,152 1235,147 1260,149 1290,163 1310,173 1335,177 1365,171 1400,165 1443,161'), 'slow');

  // histogram pane
  line(s, 540, 850.5, 1493, 850.5, 'level');
  line(s, 540, 914.5, 1493, 914.5, 'level');
  line(s, 540, 882.5, 1493, 882.5, 'zero');
  o('34,627 47,765 59,660 72,618 85,711 97,723 125,582 138,813 151,837 163,726 176,741 189,939 203,1065 216,624 229,759 242,810 254,702 267,693 280,723 294,693 307,693 333,735 345,744 358,744 373,717 386,693 398,693 411,765 424,762 436,765 451,717 464,702 477,723 489,732 502,702 514,642 543,762 556,765 568,726 593,798 621,741 633,879 646,804 659,627 672,798 684,741 699,675 712,834 725,675 737,684 750,711 763,804 775,714 790,681 803,747 815,699 828,738 841,699 853,699 869,726 881,750 894,756 920,783 932,714 947,681 960,735 972,771 985,720 997,780 1010,720 1023,666 1038,714 1063,666 1076,675 1089,702 1101,726 1117,786 1129,693 1142,741 1154,744 1167,675 1180,747 1195,717 1207,738 1220,759 1233,714 1245,834 1258,633 1271,786 1286,651 1299,696 1311,711 1324,669 1349,711 1365,717 1377,726 1389,759 1402,699 1415,741 1427,744 1443,846')
    .forEach(([x, y]) => add(s, 'rect', { x: Math.round(x - 1.500), y: Math.min(y, 883), width: 3, height: Math.max(1, Math.abs(y - 883)), fill: y > 883 ? '#ee1010' : '#000', class: 'crisp' }));

  frame(s, 540, 30, 1544, 1036, 1493, 1008);
  line(s, 540, 641.5, 1544, 641.5, 'axis');
  line(s, 540, 823.5, 1544, 823.5, 'axis');
  line(s, 1493, 32.5, 1498, 32.5, 'axis');
  yLabels(s, 1493, 2920, 20, [57.5, 83.5, 108.5, 134.5, 160.5, 186.5, 212.5, 238.5, 265.5, 292.5, 319.5, 346.5, 374.5, 401.5, 429.5, 457.5, 485.5, 514.5, 543.5, 572.5, 601.5, 630.5]);
  [[659.5, '50'], [704.5, '0'], [749.5, '-50'], [794.5, '-100'], [850.5, '2'], [882.5, '0'], [914.5, '-2'], [946.5, '-4'], [978.5, '-6']].forEach(([y, t]) => {
    line(s, 1493, y, 1498, y, 'axis');
    label(s, 1502, y + 4, t);
  });
  xTicks(s, 1008, [[609.5, 'Feb'], [712.5, 'Mar'], [821.5, 'Apr'], [929.5, 'May'], [1048.5, 'Jun'], [1156.5, 'Jul'], [1269.5, 'Aug'], [1388.5, 'Sep']]);
  tag(s, 1493, 286.5);
  nav(s, 1461, 40);
  label(s, 546.500, 99, 'Remek! Daily', 'title', 104);
  label(s, 544.500, 998, '© 2018 NinjaTrader, LLC', '', 117.500);
}
```
